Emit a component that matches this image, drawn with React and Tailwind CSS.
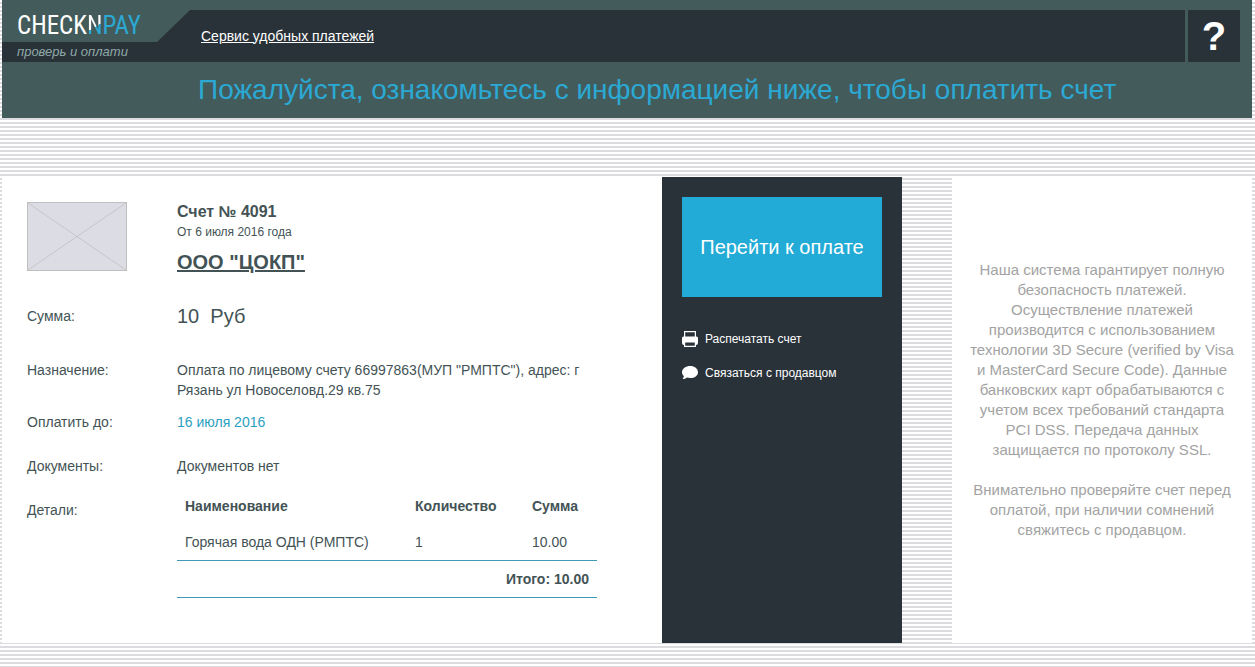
const items = [{ name: 'Горячая вода ОДН (РМПТС)', count: 1, sum: '10.00' }];

function Logo() {
  return (
    <a href="#" className="block h-8 w-[188px] bg-[#435c5b] pl-[15px] [clip-path:polygon(0_0,188px_0,155px_32px,0_32px)]">
      <span className="font-['Roboto_Condensed','Roboto',sans-serif] text-[25px] leading-8 text-white">
        CHECK
        <span className="bg-[linear-gradient(150deg,#ffffff_55%,#2ba9d4_55%)] bg-clip-text text-transparent">N</span>
        <span className="text-[#2ba9d4]">PAY</span>
      </span>
    </a>
  );
}

function Header() {
  return (
    <header className="bg-[#435c5b] pt-[10px]">
      <div className="flex gap-[3px] pr-3">
        <div className="flex h-[52px] flex-1 bg-[#293239]">
          <div>
            <Logo />
            <p className="pl-[15px] text-[13px] leading-5 text-[#8fa9a8] italic">проверь и оплати</p>
          </div>
          <nav className="flex items-center pl-[11px]">
            <a href="#" className="text-[14px] text-white underline">Сервис удобных платежей</a>
          </nav>
        </div>
        <button type="button" aria-label="Помощь" className="size-[52px] bg-[#293239] text-[40px] leading-none font-bold text-white">?</button>
      </div>
      <h1 className="px-[196px] text-[28px] leading-[56px] whitespace-nowrap text-[#2ba9d4]">
        Пожалуйста, ознакомьтесь с информацией ниже, чтобы оплатить счет
      </h1>
    </header>
  );
}

function Placeholder() {
  return (
    <svg width="100" height="69" viewBox="0 0 100 69" className="block" aria-hidden="true">
      <rect x="0.5" y="0.5" width="99" height="68" fill="#dcdce5" stroke="#bfbfbf" />
      <path d="M1 1L99 68M99 1L1 68" stroke="#c6c6c6" />
    </svg>
  );
}

function PrintIcon() {
  return (
    <svg width="16" height="16" viewBox="0 0 16 16" aria-hidden="true">
      <path d="M2.600 6V.6h10.800V6" fill="none" stroke="#fff" strokeWidth="1.2" />
      <path d="M1.500 5.500h13A1.500 1.500 0 0 1 16 7v5a2 2 0 0 1-2 2v2H2v-2a2 2 0 0 1-2-2V7A1.500 1.500 0 0 1 1.500 5.500zM3.200 11.500v3.300h9.600v-3.300z" fill="#fff" fillRule="evenodd" />
    </svg>
  );
}

function BubbleIcon() {
  return (
    <svg width="16" height="16" viewBox="0 0 16 16" aria-hidden="true">
      <path d="M8.200 1C12.600 1 16 3.700 16 7.200s-3.400 5.800-7.800 5.800c-1.200 0-2.400-.2-3.400-.5-1 1-2.600 1.500-4.300 1.500.9-.8 1.300-1.700 1.300-2.900C.700 10 0 8.700 0 7.200 0 3.700 3.800 1 8.200 1z" fill="#fff" />
    </svg>
  );
}

function Row({ label, children, className }) {
  return (
    <div className={`flex ${className}`}>
      <dt className="w-[150px] shrink-0">{label}</dt>
      <dd className="w-[420px]">{children}</dd>
    </div>
  );
}

function ItemsTable() {
  return (
    <table className="-mt-3 w-full table-fixed border-separate border-spacing-0 text-left leading-5">
      <thead>
        <tr>
          <th className="w-[230px] p-2 font-bold">Наименование</th>
          <th className="w-[117px] p-2 font-bold">Количество</th>
          <th className="p-2 font-bold">Сумма</th>
        </tr>
      </thead>
      <tbody>
        {items.map((item) => (
          <tr key={item.name}>
            <td className="border-b border-[#3f9bb8] p-2">{item.name}</td>
            <td className="border-b border-[#3f9bb8] p-2">{item.count}</td>
            <td className="border-b border-[#3f9bb8] p-2">{item.sum}</td>
          </tr>
        ))}
      </tbody>
      <tfoot>
        <tr>
          <td colSpan={3} className="border-b border-[#3f9bb8] p-2 text-right font-bold">Итого: 10.00</td>
        </tr>
      </tfoot>
    </table>
  );
}

function Invoice() {
  return (
    <section className="flex-1 bg-white px-[25px] pt-[25px] pb-[45px] text-[14px] leading-5 text-[#435355]">
      <div className="flex">
        <div className="w-[150px] shrink-0">
          <Placeholder />
        </div>
        <div>
          <h2 className="text-[16px] leading-5 font-bold">Счет № 4091</h2>
          <p className="text-[12px] leading-5">От 6 июля 2016 года</p>
          <a href="#" className="block text-[20px] leading-10 font-bold underline">ООО "ЦОКП"</a>
        </div>
      </div>
      <dl>
        <Row label="Сумма:" className="mt-[14px] leading-10">
          <span className="block text-[20px] whitespace-pre">10  Руб</span>
        </Row>
        <Row label="Назначение:" className="mt-6">
          Оплата по лицевому счету 66997863(МУП "РМПТС"), адрес: г Рязань ул Новоселовд.29 кв.75
        </Row>
        <Row label="Оплатить до:" className="mt-3">
          <span className="text-[#2b9fc0]">16 июля 2016</span>
        </Row>
        <Row label="Документы:" className="mt-6">Документов нет</Row>
        <Row label="Детали:" className="mt-6">
          <ItemsTable />
        </Row>
      </dl>
    </section>
  );
}

function Actions() {
  return (
    <aside className="w-60 shrink-0 bg-[#293239] p-5 text-[12px] text-white">
      <button type="button" className="h-[100px] w-full bg-[#22abd6] text-[20px]">Перейти к оплате</button>
      <div className="mt-8 flex flex-col gap-[14px] leading-5">
        <a href="#" className="flex items-center gap-[7px]"><PrintIcon />Распечатать счет</a>
        <a href="#" className="flex items-center gap-[7px]"><BubbleIcon />Связаться с продавцом</a>
      </div>
    </aside>
  );
}

function Guarantee() {
  return (
    <aside className="ml-[50px] w-[300px] shrink-0 bg-white px-[14px] pt-[83px] text-center text-[15px] leading-5 text-[#a3a3a3]">
      <p>
        Наша система гарантирует полную безопасность платежей.
        <br />
        Осуществление платежей производится с использованием технологии 3D Secure (verified by Visa и MasterCard Secure Code). Данные банковских карт обрабатываются с учетом всех требований стандарта PCI&nbsp;DSS. Передача данных защищается по протоколу SSL.
      </p>
      <p className="mt-5">Внимательно проверяйте счет перед оплатой, при наличии сомнений свяжитесь с продавцом.</p>
    </aside>
  );
}

export default function App() {
  return (
    <div className="min-h-screen bg-[repeating-linear-gradient(to_bottom,#ffffff_0px,#ffffff_2px,#dcdce0_2px,#dcdce0_4px)] pr-[3px] pl-[2px] font-['Liberation_Sans',Arial,sans-serif]">
      <Header />
      <main className="mt-[59px] flex">
        <Invoice />
        <Actions />
        <Guarantee />
      </main>
    </div>
  );
}
